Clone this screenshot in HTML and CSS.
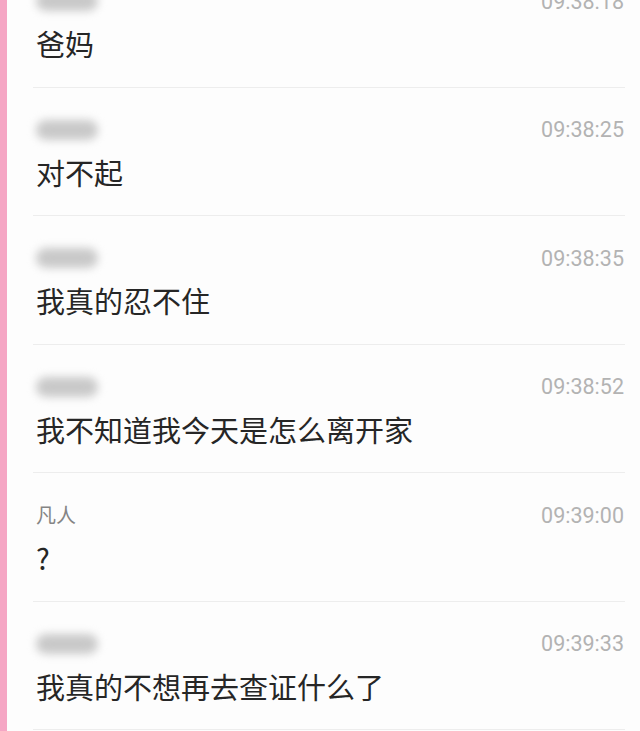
FILE: index.html
```html
<!DOCTYPE html>
<html lang="zh-CN">
<head>
    <meta charset="UTF-8">
    <meta name="viewport" content="width=device-width, initial-scale=1.0">
    <title>聊天记录</title>
    <link rel="stylesheet" href="styles.css">
</head>
<body>
    <div id="history">
        <div class="record">
            <div class="head"><span class="name hidden"></span><span class="time">09:38:18</span></div>
            <div class="text">爸妈</div>
        </div>
        <div class="record">
            <div class="head"><span class="name hidden"></span><span class="time">09:38:25</span></div>
            <div class="text">对不起</div>
        </div>
        <div class="record">
            <div class="head"><span class="name hidden"></span><span class="time">09:38:35</span></div>
            <div class="text">我真的忍不住</div>
        </div>
        <div class="record">
            <div class="head"><span class="name hidden"></span><span class="time">09:38:52</span></div>
            <div class="text">我不知道我今天是怎么离开家</div>
        </div>
        <div class="record">
            <div class="head"><span class="name">凡人</span><span class="time">09:39:00</span></div>
            <div class="text">?</div>
        </div>
        <div class="record">
            <div class="head"><span class="name hidden"></span><span class="time">09:39:33</span></div>
            <div class="text">我真的不想再去查证什么了</div>
        </div>
    </div>
</body>
</html>
```

FILE: styles.css
```css
html, body {
    margin: 0;
    height: 100%;
    overflow: hidden;
}

body {
    background-color: #fdfdfd;
    border-left: 7px solid #f5a6c4;
    box-sizing: border-box;
    font-family: "Noto Sans CJK SC", "Noto Sans", sans-serif;
}

#history {
    margin: -41px 15px 0 26px;
}

.record {
    padding: 30px 0 25.5px 3px;
    border-bottom: 1px solid #ededed;
}

.head {
    display: flex;
    justify-content: space-between;
    align-items: center;
    height: 24px;
}

.name {
    font-size: 20px;
    color: #858585;
    line-height: 24px;
}

/* nickname blurred out in the screenshot */
.hidden {
    width: 62px;
    height: 20px;
    border-radius: 10px;
    background-color: #c9c9c9;
    filter: blur(4px);
}

.time {
    font-family: Roboto, "Liberation Sans", sans-serif;
    font-size: 21.5px;
    color: #b3b3b3;
    margin-right: 1px;
}

.text {
    margin-top: 12px;
    font-size: 29px;
    line-height: 36px;
    color: #262626;
}
```
